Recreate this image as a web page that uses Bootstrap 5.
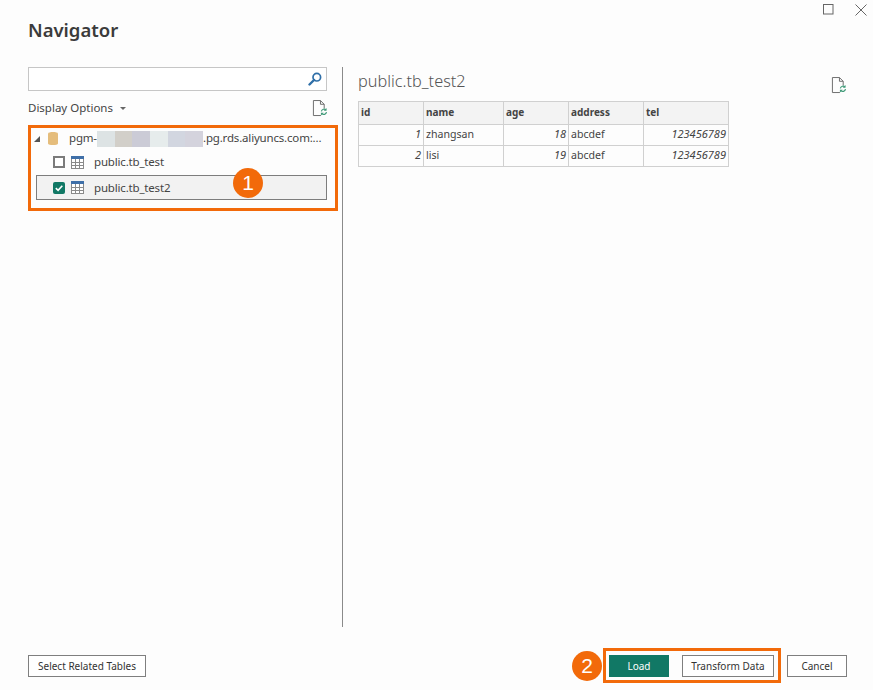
<!DOCTYPE html>
<html lang="en">
<head>
<meta charset="utf-8">
<title>Navigator</title>
<link href="https://cdn.jsdelivr.net/npm/bootstrap@5.3.0/dist/css/bootstrap.min.css" rel="stylesheet">
<style>
html,body{height:690px;overflow:hidden}
body{background:#fdfdfd;color:#444;font-family:"Noto Sans","Open Sans",sans-serif;font-size:11.5px;line-height:16px}
.dlg{height:690px;padding:0 26px 7px 28px}
.winbar{height:17px;padding:4px 0 0;margin-right:-20px;gap:21px;flex:none}
.dlg-title{font-size:18.5px;font-weight:600;line-height:26px;color:#3b3b3b;margin:0;height:50px;flex:none}
.panes{height:560px;flex:none}
.left-pane{width:315px;padding-right:10px;border-right:1px solid #8a8a8a;margin-right:15px;flex:none}
.search-box{width:299px;height:24px;border:1px solid #c6c6c6;background:#fff;padding-right:4px}
.opts-row{width:299px;height:34px;padding-top:9px}
.caret-mini{width:0;height:0;border-left:3px solid transparent;border-right:3px solid transparent;border-top:3px solid #666;margin-left:7px}
.tree-box{width:310px;height:86px;border:3px solid #f26a0a;padding:0 0 0 3px;letter-spacing:-.18px}
.tree-l1{height:21px}
.tree-l2{padding-left:19px;height:26px}
.tree-sel{width:291px;height:25px;background:#f2f2f2;border:1px solid #7d7d7d;margin-left:2px;padding-left:16px}
.tri{width:0;height:0;border-style:solid;border-width:0 0 6px 6px;border-color:transparent transparent #555 transparent;margin-right:8px}
.nm{margin-left:10px}
.nm-db{margin-left:11px;white-space:nowrap;color:#444}
.blur-seg{display:inline-block;width:17.7px;height:16px;vertical-align:middle}
.s1{background:#dde3e4}.s2{background:#d2cfc9}.s3{background:#cbcbd6}.s4{background:#e6ecec}.s5{background:#d2d6e0}.s6{background:#d4d3dd}
.chk{width:12px;height:12px;border:2px solid #7b7b7b;background:#fff;margin-right:6px;flex:none}
.chk-svg{margin-right:6px}
.pin{position:absolute;width:30px;height:30px;border-radius:50%;background:#f26a0a;color:#fff;font-size:21px;line-height:30px;text-align:center;font-family:"Liberation Sans",sans-serif}
.pin-a{left:233px;top:168px}
.right-pane{min-width:0}
.prev-head{width:488px;height:34px;padding-top:3px}
.prev-title{font-size:16.3px;font-weight:300;color:#555;line-height:22px;margin:0}
.ref-right{margin-top:7px}
.data-tbl{width:371px;table-layout:fixed;border-collapse:collapse;margin:0;font-size:10.6px;line-height:14px}
.data-tbl th,.data-tbl td{border:1px solid #d0d0d0;padding:2px;height:21px;color:#444;background:transparent;box-shadow:none}
.data-tbl th{background:#f3f3f3;font-weight:700;font-size:10px;height:23px;padding-top:0;padding-bottom:5px;color:#444}
.data-tbl td.num{text-align:right;font-style:italic;font-size:11px}
.c1{width:65px}.c2{width:80px}.c3{width:65px}.c4{width:75px}
.foot{height:35px;margin-top:21px;flex:none}
.bbtn{--bs-btn-font-size:10px;--bs-btn-line-height:14px;--bs-btn-padding-y:3px;--bs-btn-padding-x:0;--bs-btn-border-radius:0;--bs-btn-border-color:#7f7f7f;--bs-btn-color:#333;--bs-btn-bg:#fff;height:22px}
.b-rel{width:118px}
.b-load{width:60px;--bs-btn-bg:#117865;--bs-btn-border-color:#117865;--bs-btn-color:#fff}
.b-trans{width:92px}
.b-cancel{width:60px;margin-left:6px}
.act-box{width:178px;height:35px;border:3px solid #f26a0a;gap:13px;padding-left:3px;margin-left:1px}
.pin-wrap{position:relative;width:30px;height:30px}
.pin-b{left:0;top:0}
.ic{display:block;flex:none}
</style>
</head>
<body>
<div class="dlg d-flex flex-column">
  <div class="winbar d-flex justify-content-end align-items-start">
    <svg class="ic" width="11" height="11" viewBox="0 0 11 11"><rect x=".5" y=".5" width="9.5" height="9.5" fill="none" stroke="#666"/></svg>
    <svg class="ic" width="12" height="12" viewBox="0 0 12 12"><path d="M.5.5l11 11M11.500.5l-11 11" stroke="#666" fill="none"/></svg>
  </div>
  <h1 class="dlg-title">Navigator</h1>
  <div class="panes d-flex">
    <div class="left-pane">
      <div class="search-box d-flex align-items-center justify-content-end">
        <svg class="ic" width="14" height="14" viewBox="0 0 14 14"><circle cx="8.800" cy="5.200" r="3.800" fill="none" stroke="#2f6fa8" stroke-width="1.700"/><path d="M6 8L1.500 12.500" stroke="#2f6fa8" stroke-width="2.400" stroke-linecap="round"/></svg>
      </div>
      <div class="opts-row d-flex align-items-start justify-content-between">
        <div class="d-flex align-items-center"><span>Display Options</span><span class="caret-mini"></span></div>
        <svg class="ic" width="15" height="17" viewBox="0 0 16 18"><path d="M9.500 16.500H1.500V.5H9L13 4.500V9M9 .5V4.500H13" fill="none" stroke="#666"/><path d="M10 12a3 3 0 0 1 5-1.500M15.500 13a3 3 0 0 1-5 1.500" fill="none" stroke="#3f9a78" stroke-width="1.300"/><path d="M15.500 8.500v3h-3zM9.500 16.500v-3h3z" fill="#3f9a78"/></svg>
      </div>
      <div class="tree-box">
        <div class="tree-l1 d-flex align-items-center">
          <span class="tri"></span>
          <svg class="ic" width="10" height="15" viewBox="0 0 10 15"><path d="M0 2.500C0 .5 10 .5 10 2.500V12.500C10 14.500 0 14.500 0 12.500Z" fill="#e5bd7c"/></svg>
          <span class="nm-db">pgm-<span class="blur-seg s1"></span><span class="blur-seg s2"></span><span class="blur-seg s3"></span><span class="blur-seg s4"></span><span class="blur-seg s5"></span><span class="blur-seg s6"></span>.pg.rds.aliyuncs.com:...</span>
        </div>
        <div class="tree-l2 d-flex align-items-center">
          <span class="chk"></span>
          <svg class="ic" width="13" height="13" viewBox="0 0 13 13"><rect x=".5" y=".5" width="12" height="12" fill="#fff" stroke="#8a8a8a"/><rect x="0" y="0" width="13" height="3" fill="#3f6fa8"/><path d="M0 6.500H13M0 9.500H13M4.500 3V13M8.500 3V13" stroke="#8a8a8a" fill="none"/></svg>
          <span class="nm">public.tb_test</span>
        </div>
        <div class="tree-sel d-flex align-items-center">
          <svg class="ic chk-svg" width="12" height="12" viewBox="0 0 12 12"><rect width="12" height="12" rx="2" fill="#117865"/><path d="M2.800 6.200l2.300 2.200 4.200-4.600" fill="none" stroke="#fff" stroke-width="1.600"/></svg>
          <svg class="ic" width="13" height="13" viewBox="0 0 13 13"><rect x=".5" y=".5" width="12" height="12" fill="#fff" stroke="#8a8a8a"/><rect x="0" y="0" width="13" height="3" fill="#3f6fa8"/><path d="M0 6.500H13M0 9.500H13M4.500 3V13M8.500 3V13" stroke="#8a8a8a" fill="none"/></svg>
          <span class="nm">public.tb_test2</span>
        </div>
      </div>
      <div class="pin pin-a">1</div>
    </div>
    <div class="right-pane flex-grow-1">
      <div class="prev-head d-flex justify-content-between align-items-start">
        <h2 class="prev-title">public.tb_test2</h2>
        <svg class="ic ref-right" width="15" height="17" viewBox="0 0 16 18"><path d="M9.500 16.500H1.500V.5H9L13 4.500V9M9 .5V4.500H13" fill="none" stroke="#666"/><path d="M10 12a3 3 0 0 1 5-1.500M15.500 13a3 3 0 0 1-5 1.500" fill="none" stroke="#3f9a78" stroke-width="1.300"/><path d="M15.500 8.500v3h-3zM9.500 16.500v-3h3z" fill="#3f9a78"/></svg>
      </div>
      <table class="table data-tbl">
        <colgroup><col class="c1"><col class="c2"><col class="c3"><col class="c4"><col></colgroup>
        <thead><tr><th>id</th><th>name</th><th>age</th><th>address</th><th>tel</th></tr></thead>
        <tbody>
          <tr><td class="num">1</td><td>zhangsan</td><td class="num">18</td><td>abcdef</td><td class="num">123456789</td></tr>
          <tr><td class="num">2</td><td>lisi</td><td class="num">19</td><td>abcdef</td><td class="num">123456789</td></tr>
        </tbody>
      </table>
    </div>
  </div>
  <div class="foot d-flex align-items-center justify-content-between">
    <button type="button" class="btn bbtn b-rel">Select Related Tables</button>
    <div class="d-flex align-items-center">
      <div class="pin-wrap"><div class="pin pin-b">2</div></div>
      <div class="act-box d-flex align-items-center">
        <button type="button" class="btn bbtn b-load">Load</button>
        <button type="button" class="btn bbtn b-trans">Transform Data</button>
      </div>
      <button type="button" class="btn bbtn b-cancel">Cancel</button>
    </div>
  </div>
</div>
</body>
</html>
